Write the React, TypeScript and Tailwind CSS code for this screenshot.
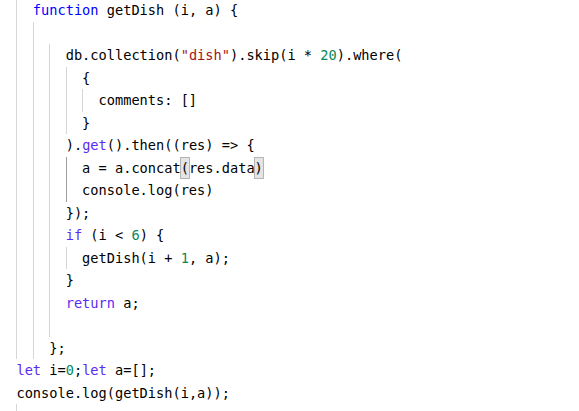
import React from 'react';

type Kind = 'kw' | 'ctl' | 'str' | 'num' | 'box' | undefined;
type Tok = [string, Kind?];

interface Line {
  ind: number; // indent in units of 2 columns
  active?: number; // index of the highlighted guide
  toks: Tok[];
}

const tone: Record<string, string> = {
  kw: 'text-[#0000ff]',
  ctl: 'text-[#5a2cf2]',
  str: 'text-[#a31515]',
  num: 'text-[#098658]',
};

const lines: Line[] = [
  { ind: 2, toks: [['function', 'kw'], [' getDish (i, a) {']] },
  { ind: 3, toks: [] },
  { ind: 4, toks: [['db.collection('], ['"dish"', 'str'], [').skip(i * '], ['20', 'num'], [').where(']] },
  { ind: 5, toks: [['{']] },
  { ind: 6, toks: [['comments: []']] },
  { ind: 5, toks: [['}']] },
  { ind: 4, toks: [[').'], ['get', 'ctl'], ['().then((res) => {']] },
  { ind: 5, active: 4, toks: [['a = a.concat'], ['(', 'box'], ['res.data'], [')', 'box']] },
  { ind: 5, active: 4, toks: [['console.log(res)']] },
  { ind: 4, toks: [['});']] },
  { ind: 4, toks: [['if', 'ctl'], [' (i < '], ['6', 'num'], [') {']] },
  { ind: 5, toks: [['getDish(i + '], ['1', 'num'], [', a);']] },
  { ind: 4, toks: [['}']] },
  { ind: 4, toks: [['return', 'ctl'], [' a;']] },
  { ind: 4, toks: [] },
  { ind: 3, toks: [['};']] },
  { ind: 1, toks: [['let', 'ctl'], [' i='], ['0', 'num'], [';'], ['let', 'ctl'], [' a=[];']] },
  { ind: 1, toks: [['console.log(getDish(i,a));']] },
  { ind: 2, toks: [] },
];

const CodeLine: React.FC<{ line: Line }> = ({ line }) => (
  <div className="flex h-[22.5px] items-stretch">
    {Array.from({ length: line.ind }).map((_, i) => (
      <span
        key={i}
        className={`w-[2ch] shrink-0 ${
          i === 0 ? '' : i === line.active ? 'border-l border-[#9f9f9f]' : 'border-l border-[#d6d6d6]'
        }`}
      />
    ))}
    <span className="whitespace-pre leading-[22.5px] text-black">
      {line.toks.map(([text, kind], i) =>
        kind === 'box' ? (
          <span key={i} className="bg-[#e4e4e4] py-[2px] outline outline-1 outline-[#b5b5b5]">
            {text}
          </span>
        ) : (
          <span key={i} className={kind ? tone[kind] : ''}>
            {text}
          </span>
        )
      )}
    </span>
  </div>
);

export default function App() {
  return (
    <div className="h-[411px] w-[579px] overflow-hidden bg-white font-['DejaVu_Sans_Mono',monospace] text-[13.65px]">
      <div className="-mt-px">
        {lines.map((line, i) => (
          <CodeLine key={i} line={line} />
        ))}
      </div>
    </div>
  );
}
